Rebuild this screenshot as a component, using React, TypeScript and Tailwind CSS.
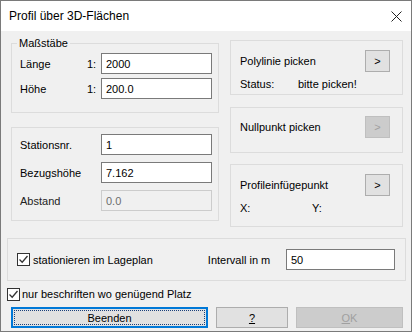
import React from "react";

const font = { fontFamily: '"Liberation Sans", Arial, sans-serif' };

function Input({ value, disabled, className = "" }: { value: string; disabled?: boolean; className?: string }) {
  return (
    <div
      className={`h-[21px] flex items-center pl-[4px] border ${
        disabled ? "bg-[#f0f0f0] border-[#cccccc] text-[#6d6d6d]" : "bg-white border-[#7a7a7a] text-black"
      } ${className}`}
    >
      {value}
    </div>
  );
}

function PickButton({ disabled }: { disabled?: boolean }) {
  return (
    <div
      className={`w-[25px] h-[22px] flex items-center justify-center border ${
        disabled ? "bg-[#cccccc] border-[#bfbfbf] text-[#a0a0a0]" : "bg-[#e1e1e1] border-[#adadad] text-black"
      }`}
    >
      &gt;
    </div>
  );
}

function Check() {
  return (
    <div className="w-[13px] h-[13px] border border-[#333333] bg-white flex items-center justify-center shrink-0">
      <svg width="11" height="11" viewBox="0 0 11 11">
        <path d="M1.5 5.5 L4.2 8.2 L9.5 2" fill="none" stroke="#333" strokeWidth="1.3" />
      </svg>
    </div>
  );
}

export default function App() {
  return (
    <div
      className="w-[412px] h-[332px] border border-[#7a7a7a] flex flex-col text-[11px] leading-[16px] text-black"
      style={font}
    >
      {/* Title bar */}
      <div className="h-[30px] bg-white flex items-center justify-between pl-[8px] pr-[9px] shrink-0">
        <span className="text-[12px]">Profil über 3D-Flächen</span>
        <svg width="11" height="11" viewBox="0 0 11 11" className="mt-[1px]">
          <path d="M0.5 0.5 L10.5 10.5 M10.5 0.5 L0.5 10.5" stroke="#222" strokeWidth="1" />
        </svg>
      </div>

      {/* Body */}
      <div className="flex-1 bg-[#f0f0f0] flex flex-col">
        <div className="flex items-start pl-[10px] gap-[11px]">
          {/* Left column */}
          <div className="w-[208px] flex flex-col">
            <div className="relative mt-[12px] h-[70px] border border-[#dcdcdc] pl-[8px] pt-[9px] flex flex-col gap-[4px]">
              <span className="absolute -top-[9px] left-[5px] px-[2px] bg-[#f0f0f0]">Maßstäbe</span>
              <div className="flex items-center">
                <span className="w-[67px]">Länge</span>
                <span className="mr-[1px]">1:</span>
                <Input value="2000" className="ml-auto w-[111px] mr-[6px]" />
              </div>
              <div className="flex items-center">
                <span className="w-[67px]">Höhe</span>
                <span className="mr-[1px]">1:</span>
                <Input value="200.0" className="ml-auto w-[111px] mr-[6px]" />
              </div>
            </div>
            <div className="mt-[14px] h-[94px] border border-[#dcdcdc] pl-[8px] pt-[6px] flex flex-col gap-[7px]">
              <div className="flex items-center">
                <span>Stationsnr.</span>
                <Input value="1" className="ml-auto w-[111px] mr-[6px]" />
              </div>
              <div className="flex items-center">
                <span>Bezugshöhe</span>
                <Input value="7.162" className="ml-auto w-[111px] mr-[6px]" />
              </div>
              <div className="flex items-center">
                <span className="text-[#222]">Abstand</span>
                <Input value="0.0" disabled className="ml-auto w-[111px] mr-[6px]" />
              </div>
            </div>
          </div>

          {/* Right column */}
          <div className="w-[173px] mt-[9px] flex flex-col">
            <div className="h-[55px] border border-[#dcdcdc] pl-[9px] pr-[12px] pt-[9px]">
              <div className="flex items-center justify-between">
                <span>Polylinie picken</span>
                <PickButton />
              </div>
              <div className="flex mt-[4px]">
                <span className="w-[58px]">Status:</span>
                <span>bitte picken!</span>
              </div>
            </div>
            <div className="mt-[12px] h-[46px] border border-[#dcdcdc] pl-[9px] pr-[12px] pt-[8px]">
              <div className="flex items-center justify-between">
                <span>Nullpunkt picken</span>
                <PickButton disabled />
              </div>
            </div>
            <div className="mt-[11px] h-[63px] border border-[#dcdcdc] pl-[9px] pr-[12px] pt-[9px]">
              <div className="flex items-center justify-between">
                <span>Profileinfügepunkt</span>
                <PickButton />
              </div>
              <div className="flex mt-[4px]">
                <span className="w-[72px]">X:</span>
                <span>Y:</span>
              </div>
            </div>
          </div>
        </div>

        {/* Bottom panel */}
        <div className="mt-[11px] ml-[6px] w-[399px] h-[43px] border border-[#dcdcdc] flex items-center pl-[9px]">
          <Check />
          <span className="ml-[3px]">stationieren im Lageplan</span>
          <span className="ml-[55px]">Intervall in m</span>
          <Input value="50" className="ml-auto mr-[10px] w-[109px] h-[20px]" />
        </div>

        <div className="mt-[5px] ml-[6px] flex items-center">
          <Check />
          <span className="ml-[2px]">nur beschriften wo genügend Platz</span>
        </div>

        <div className="mt-[5px] ml-[10px] flex">
          <div className="w-[197px] h-[21px] border-2 border-[#0078d7] bg-[#e1e1e1] p-[1px]">
            <div className="w-full h-full border border-dotted border-[#1a3f7a] flex items-center justify-center">
              Beenden
            </div>
          </div>
          <div className="ml-[8px] w-[72px] h-[21px] border border-[#adadad] bg-[#e1e1e1] flex items-center justify-center">
            <span className="underline">?</span>
          </div>
          <div className="ml-[8px] w-[107px] h-[21px] border border-[#bfbfbf] bg-[#cccccc] flex items-center justify-center text-[#a0a0a0]">
            <span>
              <span className="underline">O</span>K
            </span>
          </div>
        </div>
      </div>
    </div>
  );
}
